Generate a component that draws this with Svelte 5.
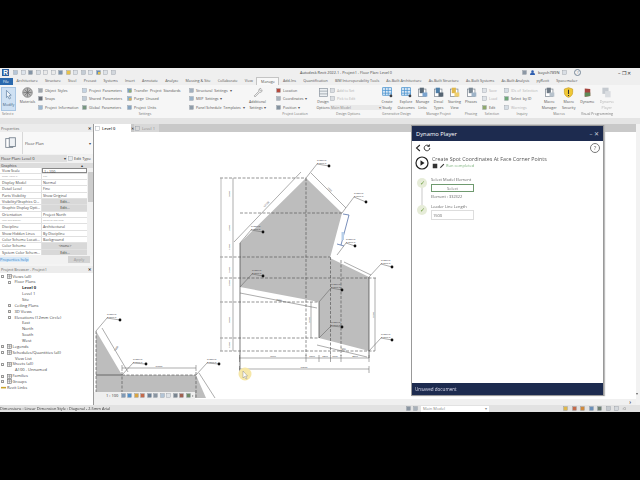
<script lang="ts">
	const tabs = ['Architecture', 'Structure', 'Steel', 'Precast', 'Systems', 'Insert', 'Annotate', 'Analyze', 'Massing & Site', 'Collaborate', 'View', 'Manage', 'Add-Ins', 'Quantification', 'BIM Interoperability Tools', 'As-Built Architecture', 'As-Built Structure', 'As-Built Systems', 'As-Built Analysis', 'pyRevit', 'Spacemaker'];

	const props = [
		['View Scale', '1 : 100', 'input'],
		['Scale Value    1:', '100', 'dim'],
		['Display Model', 'Normal', ''],
		['Detail Level', 'Fine', ''],
		['Parts Visibility', 'Show Original', ''],
		['Visibility/Graphics O...', 'Edit...', 'btn'],
		['Graphic Display Opti...', 'Edit...', 'btn'],
		['Orientation', 'Project North', ''],
		['Wall Join Display', 'Clean all wall joins', 'dim'],
		['Discipline', 'Architectural', ''],
		['Show Hidden Lines', 'By Discipline', ''],
		['Color Scheme Locati...', 'Background', ''],
		['Color Scheme', '<none>', 'btn'],
		['System Color Schem...', 'Edit...', 'btn']
	];

	const tree = [
		[0, 'Views (all)', '-', 'v'],
		[1, 'Floor Plans', '-', ''],
		[2, 'Level 0', '', 'bold'],
		[2, 'Level 1', '', ''],
		[2, 'Site', '', ''],
		[1, 'Ceiling Plans', '+', ''],
		[1, '3D Views', '+', ''],
		[1, 'Elevations (12mm Circle)', '-', ''],
		[2, 'East', '', ''],
		[2, 'North', '', ''],
		[2, 'South', '', ''],
		[2, 'West', '', ''],
		[0, 'Legends', '+', 'g'],
		[0, 'Schedules/Quantities (all)', '-', 'g'],
		[1.5, 'View List', '', ''],
		[0, 'Sheets (all)', '-', 'g'],
		[1.5, 'A100 - Unnamed', '', ''],
		[0, 'Families', '+', 'g'],
		[0, 'Groups', '+', 'g'],
		[0, 'Revit Links', '', 'l']
	];

	// leader start, shoulder, arrow end
	const spots = [
		[307, 178, 318, 164, 330, 166],
		[343, 213, 355, 197, 367, 202],
		[241, 243, 252, 230, 264, 232],
		[338, 255, 347, 243, 356, 246],
		[241, 287, 253, 274, 264, 276],
		[320, 302, 332, 288, 343, 290],
		[320, 338, 332, 326, 343, 327],
		[370, 351, 382, 338, 393, 340],
		[370, 277, 382, 264, 393, 267],
		[97, 331, 108, 318, 121, 320],
		[123, 375, 134, 363, 147, 364],
		[197, 375, 208, 363, 220, 364]
	];

	const dashed = [
		[221, 178, 307, 178], [241, 213, 343, 213], [221, 257, 331, 257], [221, 278, 377, 278],
		[221, 302, 320, 302], [221, 338, 320, 338], [221, 351, 376, 351], [307, 178, 307, 356],
		[331.5, 257, 331.5, 356], [342, 260, 342, 356], [97, 331, 97, 398], [123, 372, 123, 398],
		[197, 372, 197, 398], [123, 375, 197, 375]
	];

	const dims = [
		[235, 242, 302, 172], [312, 173, 347, 208], [345, 262, 372, 275], [241, 293, 318, 308],
		[318, 345, 368, 357], [312, 302, 312, 338], [376, 278, 376, 351], [234, 178, 234, 351],
		[240, 358, 370, 358], [240, 369, 370, 369], [103, 328, 129, 372], [123, 368, 197, 368],
		[200, 373, 216, 398]
	];

	const labels = [
		[268, 205, '12728', -45], [330, 190, '7000', 45], [231, 194, '3300', -90], [231, 228, '2300', -90],
		[231, 247, '1700', -90], [231, 270, '3100', -90], [231, 283, '1000', -90], [231, 320, '5000', -90],
		[231, 345, '1300', -90], [280, 301, '8000', 11], [311, 320, '3500', -90], [375, 315, '5500', -90],
		[274, 357, '6600', 0], [313, 357, '1300', 0], [326, 357, '1200', 0], [336, 357, '1100', 0],
		[356, 357, '2800', 0], [305, 368, '13000', 0], [160, 367, '19800', 0], [118, 349, '7000', -60],
		[344, 350, '2800', 14]
	];
</script>

{#snippet box(c: string, d = '')}
	<svg class="sm" viewBox="0 0 8 8">
		<rect x="1" y="1" width="6" height="6" fill={c} stroke="#8b939c" stroke-width=".6" />
		{#if d}<rect x="3" y="3" width="4" height="4" fill={d} />{/if}
	</svg>
{/snippet}

{#snippet doc(c: string, d: string)}
	<svg class="lg" viewBox="0 0 16 16">
		<rect x="2" y="3" width="11" height="11" fill="#fff" stroke="#76808c" />
		<rect x="4" y="1" width="6" height="8" fill={c} />
		<rect x="8" y="8" width="7" height="6" fill={d} />
	</svg>
{/snippet}

{#snippet grid(c: string)}
	<svg class="lg" viewBox="0 0 16 16">
		<rect x="1" y="1" width="13" height="11" fill="#dbe9f6" stroke={c} />
		<path d="M1 5h13M1 9h13M5 1v11M9 1v11" stroke={c} />
		<circle cx="13" cy="13" r="2" fill="#3b3f46" />
	</svg>
{/snippet}

<div class="shell">
	<div class="bar"></div>

	<div class="title">
		<svg class="logo" viewBox="0 0 8 8"><rect width="8" height="8" fill="#2a5f9e" /><text x="1.5" y="6.8" font-size="7.5" font-weight="700" fill="#fff" font-family="Liberation Sans">R</text></svg>
		<span class="quick">
			{@render box('#b6c6d8')}{@render box('#dde3ea')}{@render box('#8494a6')}{@render box('#d8dde3')}{@render box('#e9e9e9')}{@render box('#e9e9e9')}{@render box('#7d94ad')}{@render box('#e7c24a')}{@render box('#dde2e7')}{@render box('#c4ccd4')}{@render box('#dde3ea')}{@render box('#5a87c2', '#e7c24a')}{@render box('#dde2e7')}{@render box('#d2d7dc')}
		</span>
		<span class="caption">Autodesk Revit 2022.1 - Project1 - Floor Plan: Level 0</span>
		<span class="user">
			{@render box('#8c98a5')}
			<svg class="sm" viewBox="0 0 8 8"><circle cx="4" cy="2.5" r="2" fill="#2f5fb0" /><path d="M0 8c0-6 8-6 8 0z" fill="#2f5fb0" /></svg>
			<span>bayoh789N</span>
			{@render box('#d9dee4')}
			<span class="help">?</span>
		</span>
		<span class="win">– ❐ ✕</span>
	</div>

	<nav class="tabs">
		<span class="file">File</span>
		{#each tabs as tab}
			<span class:active={tab === 'Manage'}>{tab}</span>
		{/each}
	</nav>

	<div class="ribbon">
		<section class="p-select">
			<div class="body">
				<div class="modify">
					<svg class="lg" viewBox="0 0 16 16"><path d="M5 2l7 7-3 .5 2 4-2 1-2-4-2 2z" fill="#eef3f8" stroke="#5d7d9f" /></svg>
					<span>Modify</span>
				</div>
			</div>
			<footer>Select ▾</footer>
		</section>

		<section class="p-settings">
			<div class="body">
				<div class="big">
					<svg class="lg" viewBox="0 0 16 16"><circle cx="8" cy="8" r="7" fill="#b5b5b5" stroke="#777" /><path d="M2 8h12M8 2v12M4 4l8 8M12 4l-8 8" stroke="#666" stroke-width=".9" /></svg>
					<span>Materials</span>
				</div>
				<div class="stack c1">
					<span>{@render box('#a1a7ad')}Object  Styles</span>
					<span>{@render box('#6a7077')}Snaps</span>
					<span>{@render box('#9ab7d1')}Project  Information</span>
				</div>
				<div class="stack c2">
					<span>{@render box('#c4d3e2')}Project  Parameters</span>
					<span>{@render box('#c2cdd7')}Shared  Parameters</span>
					<span>{@render box('#78967f')}Global  Parameters</span>
				</div>
				<div class="stack c3">
					<span>{@render box('#7aa2cb', '#8fae74')}Transfer  Project  Standards</span>
					<span>{@render box('#7fb2d3', '#dcb05c')}Purge  Unused</span>
					<span>{@render box('#86a4c1')}Project  Units</span>
				</div>
				<div class="stack c4">
					<span>{@render box('#a2b0be')}Structural  Settings  ▾</span>
					<span>{@render box('#9ab2c8')}MEP  Settings  ▾</span>
					<span>{@render box('#8f9daa')}Panel Schedule  Templates  ▾</span>
				</div>
				<div class="big add">
					<svg class="lg" viewBox="0 0 16 16"><path d="M13 2a3 3 0 0 0-3 4L3 13l1.500 1.500L11 8a3 3 0 0 0 3.500-4L12.500 5.500 11 4z" fill="#ececec" stroke="#9a9a9a" /></svg>
					<span>Additional<br />Settings  ▾</span>
				</div>
			</div>
			<footer>Settings</footer>
		</section>

		<section class="p-location">
			<div class="body">
				<div class="stack">
					<span>{@render box('#b5493c')}Location</span>
					<span>{@render box('#a9b3bc')}Coordinates  ▾</span>
					<span>{@render box('#84929f')}Position  ▾</span>
				</div>
			</div>
			<footer>Project Location</footer>
		</section>

		<section class="p-options">
			<div class="body">
				<div class="big">
					<svg class="lg" viewBox="0 0 16 16"><rect x="2" y="2" width="12" height="12" fill="#eceff2" stroke="#8a949e" /><path d="M2 6h12M2 10h12" stroke="#8a949e" /></svg>
					<span>Design<br />Options</span>
				</div>
				<div class="stack faded">
					<span>{@render box('#dadde1')}Add to Set</span>
					<span>{@render box('#dadde1')}Pick to Edit</span>
					<span class="select">Main Model<i>▾</i></span>
				</div>
			</div>
			<footer>Design Options</footer>
		</section>

		<section class="p-gen">
			<div class="body">
				<div class="big">{@render grid('#3f8ccc')}<span>Create<br />Study</span></div>
				<div class="big">{@render grid('#3f8ccc')}<span>Explore<br />Outcomes</span></div>
			</div>
			<footer>Generative Design</footer>
		</section>

		<section class="p-manage">
			<div class="body">
				<div class="big">{@render doc('#5a6a78', '#7ba4cf')}<span>Manage<br />Links</span></div>
				<div class="big">{@render doc('#4f7fa8', '#566572')}<span>Decal<br />Types</span></div>
				<div class="big">{@render doc('#e0b84c', '#f0d070')}<span>Starting<br />View</span></div>
			</div>
			<footer>Manage Project</footer>
		</section>

		<section class="p-phase">
			<div class="body">
				<div class="big">{@render doc('#7a8894', '#9fb4c8')}<span>Phases</span></div>
			</div>
			<footer>Phasing</footer>
		</section>

		<section class="p-sel">
			<div class="body">
				<div class="stack">
					<span class="faint">{@render box('#dfe3e7')}Save</span>
					<span class="faint">{@render box('#dfe3e7')}Load</span>
					<span>{@render box('#8fa86c')}Edit</span>
				</div>
			</div>
			<footer>Selection</footer>
		</section>

		<section class="p-inq">
			<div class="body">
				<div class="stack">
					<span class="faint">{@render box('#d5dde4')}IDs of  Selection</span>
					<span>{@render box('#6ea878')}Select  by ID</span>
					<span class="faint">{@render box('#d5dde4')}Warnings</span>
				</div>
			</div>
			<footer>Inquiry</footer>
		</section>

		<section class="p-macro">
			<div class="body">
				<div class="big">{@render doc('#707b86', '#b7c2cc')}<span>Macro<br />Manager</span></div>
				<div class="big">
					<svg class="lg" viewBox="0 0 16 16"><path d="M8 1l6 2v5c0 4-3 6-6 7-3-1-6-3-6-7V3z" fill="#f0c836" stroke="#c79d1e" /><path d="M8 4v6M8 11.500v1.500" stroke="#333" stroke-width="1.500" /></svg>
					<span>Macro<br />Security</span>
				</div>
			</div>
			<footer>Macros</footer>
		</section>

		<section class="p-visual">
			<div class="body">
				<div class="big">
					<svg class="lg" viewBox="0 0 16 16"><path d="M4 2l8 1v10l-8 1z" fill="#a5453e" /><path d="M4 8h8v5l-8 1z" fill="#5e8a58" /></svg>
					<span>Dynamo</span>
				</div>
				<div class="big faint">
					<svg class="lg" viewBox="0 0 16 16"><rect x="2" y="1" width="9" height="9" fill="#c5cad0" /><rect x="6" y="6" width="8" height="9" fill="#dadde1" /></svg>
					<span>Dynamo<br />Player</span>
				</div>
			</div>
			<footer>Visual Programming</footer>
		</section>
	</div>

	<div class="band"></div>

	<div class="main">
		<aside>
			<div class="phead"><span>Properties</span><b>✕</b></div>
			<div class="typebox">
				<div class="thumb">
					<svg viewBox="0 0 16 16" width="14" height="14"><rect x="2" y="3" width="8" height="10" fill="#fff" stroke="#77828e" /><rect x="6" y="2" width="7" height="10" fill="#eef1f4" stroke="#77828e" /></svg>
				</div>
				<span>Floor Plan</span>
				<i>▾</i>
			</div>
			<div class="selrow">
				<span class="dd">Floor Plan: Level 0<i>▾</i></span>
				<span class="edit">{@render box('#e8ecf0')}Edit Type</span>
			</div>
			<div class="grouphead"><span>Graphics</span><i>▴</i></div>
			<div class="propwrap">
				<div class="proptable">
					{#each props as [name, value, kind]}
						<div class="prow" class:dim={kind === 'dim'}>
							<span class="pname">{name}</span>
							<span class="pval {kind}">{value}</span>
						</div>
					{/each}
				</div>
				<div class="vscroll"><div class="thumbbar"></div></div>
			</div>
			<div class="phelp"><a href="#help">Properties help</a><span>Apply</span></div>

			<div class="phead browser"><span>Project Browser - Project1</span><b>✕</b></div>
			<ul class="tree">
				{#each tree as [depth, name, sign, kind]}
					<li class="d{String(depth).replace('.', '')}" class:bold={kind === 'bold'}>
						{#if sign}<em>{sign}</em>{/if}
						{#if kind === 'v' || kind === 'g'}<svg class="tico" viewBox="0 0 8 8"><rect x="1" y="1" width="6" height="6" fill="#eee" stroke="#777" /><path d="M1 3.500h6M4 1v6" stroke="#777" stroke-width=".7" /></svg>{/if}
						{#if kind === 'l'}<svg class="tico" viewBox="0 0 8 8"><rect x="0" y="3" width="8" height="2.500" fill="#c9a227" /></svg>{/if}
						<span>{name}</span>
					</li>
				{/each}
			</ul>
		</aside>

		<div class="work">
			<div class="doctabs">
				<span class="dtab on">{@render box('#fff')}Level 0<b>✕</b></span>
				<span class="dtab">{@render box('#d8d8d8')}Level 1</span>
			</div>
			<div class="canvas">
				<svg class="plan" viewBox="95 132 542 267" width="542" height="267">
					<polygon points="307,178 343,213 331,258 370,277 370,351 320,338 320,302 241,287 241,243" fill="#bdbdbd" />
					<polygon points="97,331 123,375 197,375 207,398 97,398" fill="#bdbdbd" />

					{#each dashed as [x1, y1, x2, y2]}
						<line {x1} {y1} {x2} {y2} stroke="#4a4a4a" stroke-width=".6" stroke-dasharray="3 1.500" />
					{/each}
					<path d="M241 243v127M320 302v36M370 277v81M97 375h26" stroke="#444" stroke-width=".7" fill="none" />
					<path d="M222 178v173" stroke="#aaa" stroke-width=".8" />
					{#each dims as [x1, y1, x2, y2]}
						<line {x1} {y1} {x2} {y2} stroke="#5a5a5a" stroke-width=".5" />
					{/each}
					<path d="M240.500 355v7M307 355v7M320 355v7M331.500 355v7M342 355v7M370 355v7M240.500 366v7M370 366v7M123 365v6M197 365v6" stroke="#555" stroke-width=".5" />
					<path d="M350 215l-8 30M344 214l6 1M338 244l7 2" stroke="#3f5f9e" stroke-width=".7" fill="none" />
					<rect x="342.500" y="232" width="2.500" height="8" fill="#b8cfe9" />

					{#each spots as [x1, y1, x2, y2, x3, y3]}
						<polyline points="{x1},{y1} {x2},{y2} {x3},{y3}" fill="none" stroke="#5a5a5a" stroke-width=".5" />
						<circle cx={x3} cy={y3} r="1.400" fill="#111" />
						<text class="spot" x={x2} y={y2 - 2.700}>N 3210.5</text>
						<text class="spot" x={x2} y={y2 - .4}>E 2107.8</text>
					{/each}

					{#each labels as [x, y, t, r]}
						<text class="dim" {x} {y} transform="rotate({r} {x} {y})">{t}</text>
					{/each}

					<circle cx="246" cy="374" r="6.500" fill="#f6e7a8" />
					<path d="M244 371l0 7 1.500-1.500 1.500 2.500 1-.5-1.500-2.500 2 0z" fill="#fff" stroke="#777" stroke-width=".4" />
				</svg>

				<div class="viewbar">
					<span>1 : 100</span>
					{@render box('#7f99b5')}{@render box('#4f8fc9')}{@render box('#d9a441')}{@render box('#c46a4a')}{@render box('#6a7f95')}{@render box('#8a95a1')}{@render box('#b2c4d6')}{@render box('#dfe3e7')}{@render box('#7a8590')}{@render box('#a0604f')}{@render box('#6e8a68')}<b>‹</b>
				</div>
			</div>

			<div class="hscroll"><i></i><b>›</b></div>

			<div class="player">
				<header><span>Dynamo Player</span><b>– ✕</b></header>
				<div class="ptools">
					<svg viewBox="0 0 8 10" width="6" height="8"><path d="M6.500 1L2 5l4.500 4" fill="none" stroke="#222" stroke-width="1.400" /></svg>
					<svg viewBox="0 0 10 10" width="8" height="8"><path d="M8.500 5a3.500 3.500 0 1 1-1-2.500M8 .5v2.500H5.500" fill="none" stroke="#222" stroke-width="1.100" /></svg>
					<span class="q">?</span>
				</div>
				<div class="script">
					<svg viewBox="0 0 14 14" width="14" height="14"><circle cx="7" cy="7" r="6" fill="#fff" stroke="#222" stroke-width="1.200" /><path d="M5.500 4.200l4 2.800-4 2.800z" fill="#222" /></svg>
					<div>
						<h1>Create Spot Coordinates At Face Corner Points</h1>
						<p>
							<svg viewBox="0 0 8 8" width="6" height="6"><rect x="1" y="1" width="6" height="6" fill="#333" /></svg>
							<svg viewBox="0 0 8 8" width="6" height="6"><path d="M1 7l1-2 4-4 1 1-4 4z" fill="#333" /></svg>
							<span>Run completed</span>
						</p>
					</div>
				</div>
				<div class="steps">
					<div class="step">
						<span class="check">✓</span>
						<div class="fields">
							<label for="pick">Select Model Element</label>
							<button id="pick">Select</button>
							<small>Element : 332322</small>
						</div>
					</div>
					<div class="step">
						<span class="check">✓</span>
						<div class="fields">
							<label for="len">Leader Line Length</label>
							<input id="len" value="1500" />
						</div>
					</div>
				</div>
				<footer>Unsaved document</footer>
			</div>
		</div>
		<div class="rail"><b>▾</b></div>
	</div>

	<div class="status">
		<span class="msg">Dimensions : Linear Dimension Style : Diagonal - 2.5mm Arial</span>
		<span class="stico">{@render box('#8a95a1')}{@render box('#a9b2bb')}</span>
		<span class="model">Main Model<i>▾</i></span>
		<span class="stico right">{@render box('#e0b84c')}{@render box('#c46a4a')}{@render box('#d0893c')}{@render box('#6a8fb8')}{@render box('#6e7f72')}{@render box('#c4c9ce')}{@render box('#d4d8dc')}<em>:0</em></span>
	</div>

	<div class="bar fill"></div>
</div>

<style>
	:global(body) {
		margin: 0;
		background: #000;
	}

	.shell {
		width: 640px;
		height: 480px;
		display: flex;
		flex-direction: column;
		overflow: hidden;
		font-family: 'Open Sans', 'Liberation Sans', sans-serif;
		font-size: 4px;
		color: #444;
		filter: blur(0.35px);
	}

	.bar {
		height: 68px;
		background: #000;
		flex: none;
	}

	.fill {
		flex: 1;
	}

	.sm {
		width: 5px;
		height: 5px;
		flex: none;
	}

	.lg {
		width: 11px;
		height: 11px;
		flex: none;
	}

	.title {
		height: 9px;
		background: #efefef;
		display: flex;
		align-items: center;
		padding-left: 2px;
	}

	.logo {
		width: 7px;
		height: 7px;
	}

	.quick {
		display: flex;
		gap: 2.5px;
		margin-left: 4px;
		width: 200px;
	}

	.caption {
		margin-left: 87px;
		white-space: nowrap;
		font-size: 3.8px;
	}

	.user {
		position: absolute;
		left: 522px;
		display: flex;
		align-items: center;
		gap: 3px;
	}

	.help {
		margin-left: 4px;
		width: 5px;
		height: 5px;
		line-height: 5px;
		text-align: center;
		border: 0.5px solid #789;
		border-radius: 50%;
		color: #789;
	}

	.win {
		position: absolute;
		left: 618px;
		font-size: 5px;
		color: #333;
		white-space: nowrap;
	}

	.tabs {
		height: 8px;
		background: #efefef;
		display: flex;
		align-items: center;
		white-space: nowrap;
		font-size: 3.7px;
		color: #555;
	}

	.tabs span {
		padding: 0 3.6px;
		line-height: 8px;
	}

	.tabs .file {
		background: #2a69ad;
		color: #fff;
		padding: 0 3px;
		margin-right: 0;
		line-height: 7px;
		width: 7px;
	}

	.tabs .active {
		background: #f8f8f8;
		border: 0.5px solid #c4c4c4;
		border-bottom: 0;
	}

	.ribbon {
		height: 33px;
		background: #f6f6f6;
		display: flex;
		font-size: 3.6px;
	}

	.ribbon section {
		display: flex;
		flex-direction: column;
		flex: none;
	}

	.ribbon .body {
		flex: 1;
		display: flex;
		gap: 1px;
		padding-top: 2px;
		min-height: 0;
	}

	.ribbon footer {
		height: 7px;
		line-height: 6px;
		text-align: center;
		color: #777;
		font-size: 3.4px;
	}

	.p-select { width: 18px; }
	.p-settings { width: 254px; }
	.p-location { width: 46px; }
	.p-options { width: 60px; }
	.p-gen { width: 37px; }
	.p-manage { width: 47px; }
	.p-phase { width: 18px; }
	.p-sel { width: 24px; }
	.p-inq { width: 36px; }
	.p-macro { width: 38px; }
	.p-visual { width: 38px; }

	.p-select footer {
		text-align: left;
		padding-left: 2px;
	}

	.modify {
		width: 15px;
		height: 24px;
		margin-left: 1px;
		background: #cfe1f3;
		border: 0.5px solid #a9c6e3;
		display: flex;
		flex-direction: column;
		align-items: center;
		gap: 1.500px;
		padding-top: 1px;
		box-sizing: border-box;
		color: #3e5f80;
	}

	.big {
		flex: 1;
		display: flex;
		flex-direction: column;
		align-items: center;
		text-align: center;
		line-height: 5.500px;
		white-space: nowrap;
		gap: 1px;
		color: #555;
	}

	.stack {
		display: flex;
		flex-direction: column;
		gap: 3.4px;
		padding-top: 1px;
		white-space: pre;
		color: #555;
	}

	.stack span {
		display: flex;
		align-items: center;
		gap: 2px;
		height: 5px;
	}

	.faint,
	.faded {
		color: #b5b5b5;
	}

	.select {
		width: 50px;
		background: #e9e9e9;
		color: #888;
		justify-content: space-between;
		padding: 0 1px;
	}

	.select i,
	.model i,
	.dd i,
	.typebox i {
		font-style: normal;
	}

	.p-settings .big:first-child { flex: none; width: 19px; }
	.c1 { width: 43px; }
	.c2 { width: 44px; }
	.c3 { width: 61px; }
	.c4 { width: 59px; }
	.add { flex: none; width: 17px; }

	.p-location .body { padding-left: 4px; }
	.p-options .big { flex: none; width: 10px; }
	.p-options .stack { margin-left: 1px; }
	.p-sel .body { padding-left: 2px; }

	.band {
		height: 6px;
		background: #e4e4e4;
	}

	.main {
		height: 281px;
		flex: none;
		display: flex;
		position: relative;
		background: #fff;
	}

	aside {
		width: 94px;
		flex: none;
		background: #f4f4f4;
		border-right: 0.5px solid #999;
		display: flex;
		flex-direction: column;
		box-sizing: border-box;
	}

	.phead {
		height: 8px;
		flex: none;
		background: #ececec;
		display: flex;
		justify-content: space-between;
		align-items: center;
		padding: 0 2px 0 1px;
		color: #666;
		font-size: 3.8px;
	}

	.phead b {
		color: #222;
		font-size: 4px;
	}

	.typebox {
		height: 22px;
		flex: none;
		background: #f8f8f8;
		display: flex;
		align-items: center;
		gap: 2px;
		padding-right: 2px;
	}

	.typebox .thumb {
		width: 22px;
		height: 22px;
		border-right: 0.5px solid #d8d8d8;
		display: flex;
		align-items: center;
		justify-content: center;
	}

	.typebox span {
		flex: 1;
	}

	.selrow {
		height: 9px;
		flex: none;
		display: flex;
		align-items: center;
		gap: 1px;
		background: #f2f2f2;
	}

	.dd {
		width: 67px;
		height: 7px;
		background: #dfdfdf;
		display: flex;
		justify-content: space-between;
		align-items: center;
		padding: 0 1px;
		box-sizing: border-box;
		color: #333;
	}

	.edit {
		display: flex;
		align-items: center;
		gap: 1px;
		color: #333;
		white-space: nowrap;
	}

	.grouphead {
		height: 4.5px;
		flex: none;
		background: #dcdcdc;
		color: #333;
		display: flex;
		justify-content: space-between;
		align-items: center;
		padding: 0 10px 0 1px;
		font-size: 3.8px;
	}

	.grouphead i {
		font-style: normal;
	}

	.propwrap {
		height: 87px;
		flex: none;
		display: flex;
		overflow: hidden;
		background: #fff;
	}

	.proptable {
		flex: 1;
		font-size: 3.7px;
	}

	.prow {
		height: 6.33px;
		display: flex;
		border-bottom: 0.5px solid #e0e0e0;
		box-sizing: border-box;
		line-height: 5.8px;
		color: #444;
		white-space: nowrap;
	}

	.prow.dim {
		color: #999;
	}

	.pname {
		width: 42px;
		padding-left: 2px;
		border-right: 0.5px solid #e0e0e0;
		box-sizing: border-box;
	}

	.pval {
		flex: 1;
		padding-left: 1px;
	}

	.pval.btn {
		background: #d8d8d8;
		text-align: center;
		color: #333;
	}

	.pval.input {
		border: 0.5px solid #888;
		box-sizing: border-box;
		line-height: 5px;
	}

	.vscroll {
		width: 6px;
		flex: none;
		background: #f0f0f0;
	}

	.thumbbar {
		width: 5px;
		height: 30px;
		margin: 4px auto 0;
		background: #cdcdcd;
	}

	.phelp {
		height: 9px;
		flex: none;
		display: flex;
		justify-content: space-between;
		align-items: center;
		background: #f2f2f2;
	}

	.phelp a {
		color: #2d7cc4;
		background: #d6e8f8;
		text-decoration: none;
	}

	.phelp span {
		width: 22px;
		height: 7px;
		background: #d4d4d4;
		color: #999;
		text-align: center;
		line-height: 7px;
		margin-right: 3px;
	}

	.phead.browser {
		height: 7px;
		margin-top: 2px;
	}

	.tree {
		list-style: none;
		margin: 0;
		padding: 1px 0 0;
		background: #fff;
		flex: 1;
		font-size: 4.100px;
		color: #444;
	}

	.tree li {
		height: 5.87px;
		line-height: 5.87px;
		display: flex;
		align-items: center;
		gap: 1px;
		white-space: nowrap;
	}

	.tree em {
		width: 3px;
		height: 3px;
		line-height: 2.500px;
		border: 0.4px solid #999;
		font-style: normal;
		font-size: 3px;
		text-align: center;
		margin-right: 1.500px;
		box-sizing: border-box;
		color: #666;
	}

	.tree .d1 em {
		margin-right: 2.500px;
	}

	.tico {
		width: 5px;
		height: 5px;
		flex: none;
	}

	.d0 { padding-left: 1px; }
	.d1 { padding-left: 8px; }
	.d15 { padding-left: 15px; }
	.d2 { padding-left: 22px; }

	.tree .bold {
		font-weight: 700;
		color: #222;
	}

	.work {
		flex: 1;
		position: relative;
		display: flex;
		flex-direction: column;
		min-width: 0;
	}

	.doctabs {
		height: 8px;
		flex: none;
		background: #c9c9c9;
		display: flex;
	}

	.dtab {
		display: flex;
		align-items: center;
		gap: 2px;
		width: 24px;
		padding-left: 1px;
		color: #888;
		background: #d8d8d8;
		margin-left: 3px;
	}

	.dtab.on {
		width: 37px;
		margin-left: 0;
		background: #fff;
		color: #333;
		font-weight: 600;
		box-sizing: border-box;
	}

	.dtab b {
		margin-left: auto;
		color: #222;
		font-weight: 400;
		transform: translateX(3px);
	}

	.canvas {
		flex: 1;
		position: relative;
		overflow: hidden;
		min-height: 0;
	}

	.plan {
		display: block;
	}

	.spot {
		font-size: 2.300px;
		fill: #444;
		font-family: 'Liberation Sans', sans-serif;
	}

	.dim {
		font-size: 2.500px;
		fill: #444;
		text-anchor: middle;
		font-family: 'Liberation Sans', sans-serif;
	}

	.viewbar {
		position: absolute;
		left: 0;
		bottom: 0;
		height: 7px;
		width: 101px;
		background: #efefef;
		display: flex;
		align-items: center;
		gap: 1.500px;
		padding-left: 12px;
		box-sizing: border-box;
		color: #333;
	}

	.viewbar span {
		width: 13px;
		flex: none;
	}

	.hscroll {
		height: 6px;
		flex: none;
		background: #f0f0f0;
		display: flex;
		align-items: center;
		justify-content: space-between;
		padding: 0 5px 0 101px;
	}

	.hscroll i {
		width: 0;
	}

	.hscroll b {
		font-size: 5px;
	}

	.player {
		position: absolute;
		left: 317px;
		top: 1px;
		width: 193px;
		height: 271px;
		background: #fff;
		border: 0.5px solid #999;
		box-sizing: border-box;
		display: flex;
		flex-direction: column;
		box-shadow: 1px 0 1px #bbb;
	}

	.player > header {
		height: 15px;
		flex: none;
		background: #1d2b4f;
		color: #fff;
		display: flex;
		justify-content: space-between;
		align-items: center;
		padding: 0 4px;
		font-size: 5.800px;
	}

	.player > header b {
		font-weight: 400;
		color: #c8cfdc;
	}

	.ptools {
		height: 14px;
		flex: none;
		display: flex;
		align-items: center;
		gap: 2px;
		padding: 0 3px;
	}

	.q {
		margin-left: auto;
		width: 8px;
		height: 8px;
		line-height: 8px;
		border: 0.5px solid #777;
		border-radius: 50%;
		text-align: center;
		font-size: 6px;
		color: #666;
	}

	.script {
		display: flex;
		gap: 3px;
		padding-left: 3px;
		height: 15px;
		flex: none;
		align-items: center;
	}

	.script h1 {
		margin: 0;
		font-size: 5.300px;
		font-weight: 400;
		color: #555;
		line-height: 7px;
		white-space: nowrap;
	}

	.script p {
		margin: 0;
		display: flex;
		align-items: center;
		gap: 1px;
		color: #7fb47f;
		font-size: 4px;
		line-height: 6px;
	}

	.steps {
		flex: 1;
		padding: 7px 0 0 5px;
		display: flex;
		flex-direction: column;
		gap: 4px;
		position: relative;
	}

	.step {
		display: flex;
		gap: 4px;
	}

	.check {
		width: 10px;
		height: 10px;
		line-height: 10px;
		margin-top: 1px;
		border-radius: 50%;
		background: #e6ecd8;
		color: #6b9a3c;
		text-align: center;
		font-size: 6px;
		flex: none;
		position: relative;
		z-index: 1;
	}

	.steps::before {
		content: '';
		position: absolute;
		left: 9px;
		top: 9px;
		height: 28px;
		width: 1.500px;
		background: #e4e4e4;
	}

	.fields {
		display: flex;
		flex-direction: column;
		font-size: 4px;
		color: #666;
		gap: 1px;
	}

	.fields label {
		line-height: 5px;
	}

	.fields button {
		width: 43px;
		height: 8px;
		padding: 0;
		background: #fff;
		border: 0.5px solid #6f9a6f;
		font: inherit;
		color: #777;
		margin-top: 1px;
	}

	.fields small {
		font-size: 3.900px;
		line-height: 7px;
	}

	.fields input {
		width: 43px;
		height: 10px;
		padding: 0 1px;
		box-sizing: border-box;
		border: 0.5px solid #ddd;
		font: inherit;
		color: #666;
	}

	.player > footer {
		height: 12px;
		flex: none;
		background: #1d2b4f;
		color: #dde;
		font-size: 4.600px;
		line-height: 12px;
		padding-left: 3px;
	}

	.rail {
		width: 4px;
		flex: none;
		background: #f2f2f2;
		position: relative;
		color: #666;
	}

	.rail b {
		position: absolute;
		bottom: 9px;
		font-weight: 400;
	}

	.status {
		height: 7px;
		flex: none;
		background: #e2e2e2;
		display: flex;
		align-items: center;
		color: #333;
		white-space: nowrap;
	}

	.msg {
		width: 406px;
		font-size: 3.900px;
	}

	.stico {
		display: flex;
		align-items: center;
		gap: 2px;
		width: 15px;
	}

	.model {
		width: 68px;
		height: 6px;
		background: #fff;
		color: #888;
		display: flex;
		justify-content: space-between;
		align-items: center;
		padding: 0 2px;
		box-sizing: border-box;
	}

	.stico.right {
		width: auto;
		margin-left: 74px;
		gap: 3.500px;
	}

	.stico em {
		font-style: normal;
		color: #777;
	}
</style>
